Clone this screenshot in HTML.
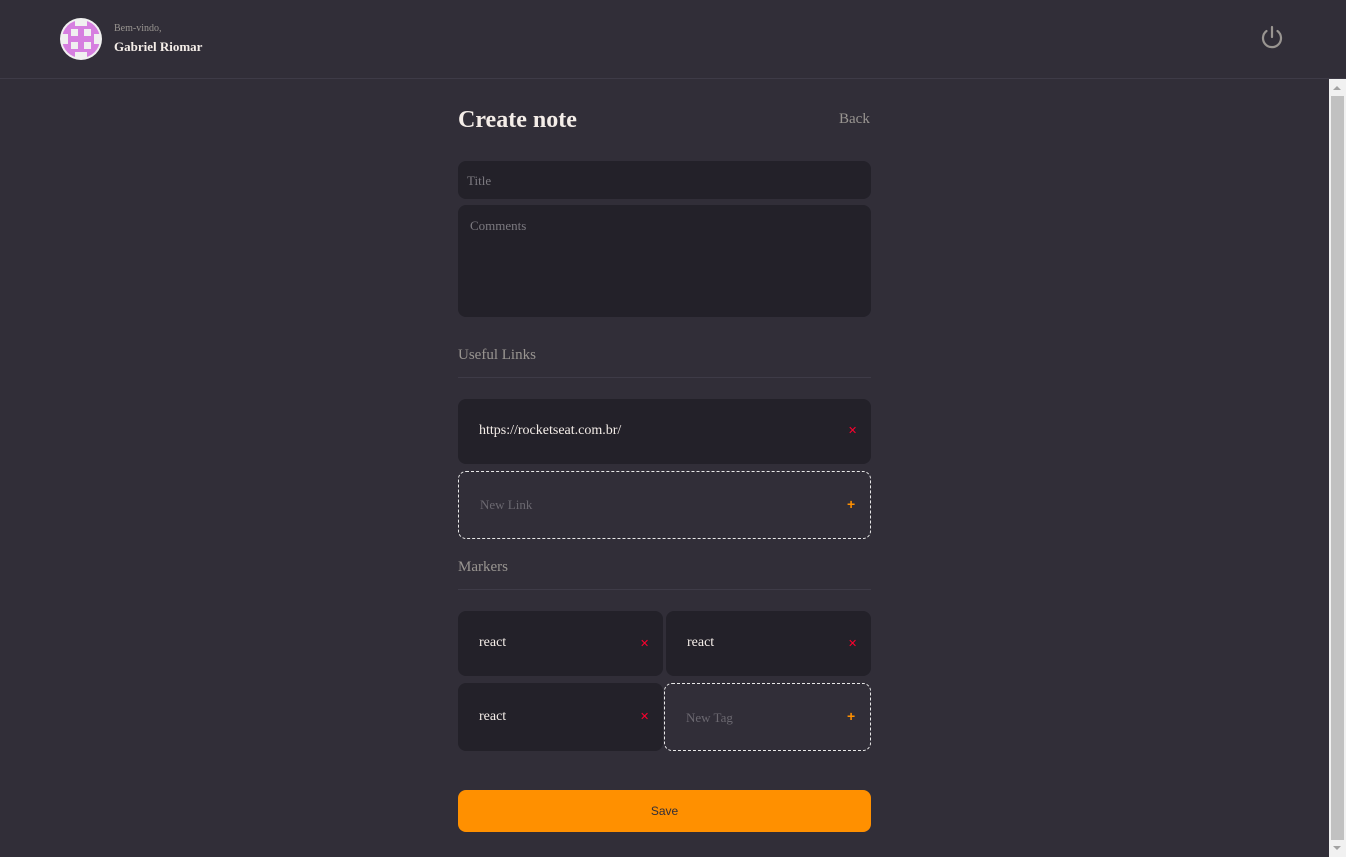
<!DOCTYPE html>
<html><head><meta charset="utf-8"><style>
*{box-sizing:border-box;margin:0;padding:0}
body{width:1346px;height:857px;background:#312e38;font-family:"Liberation Serif",serif;position:relative;overflow:hidden}
.hdr{position:absolute;left:0;top:0;width:1346px;height:79px;border-bottom:1px solid #3e3b47}
.av{position:absolute;left:60px;top:18px;width:42px;height:42px;border-radius:50%;background:#f0f0f0;overflow:hidden}
.av .in{position:absolute;left:2px;top:2px;width:38px;height:38px;border-radius:50%;background:#d67fe0}
.av i{position:absolute;width:7px;height:7px;background:#f0f0f0}
.welcome{position:absolute;left:114px;top:23px;font-size:10px;color:#999591}
.name{position:absolute;left:114px;top:39px;font-size:13px;font-weight:bold;color:#f4ede8}
.pw{position:absolute;left:1259px;top:25px}
.sb{position:absolute;left:1329px;top:79px;width:17px;height:778px;background:#f1f1f1}
.sb .th{position:absolute;left:2px;top:17px;width:13px;height:744px;background:#c1c1c1}
.sb .up,.sb .dn{position:absolute;left:4px;width:0;height:0;border-left:4px solid transparent;border-right:4px solid transparent}
.sb .up{top:7px;border-bottom:4px solid #a3a3a3}
.sb .dn{bottom:7px;border-top:4px solid #a3a3a3}
h1{position:absolute;left:458px;top:107px;font-size:24px;color:#f4ede8;font-weight:bold}
.back{position:absolute;left:839px;top:111px;font-size:15px;color:#999591}
.box{position:absolute;left:458px;width:413px;background:#232129;border-radius:8px;color:#7c7a80;font-size:13px}
.lbl{position:absolute;left:458px;font-size:15px;color:#999591}
.line{position:absolute;left:458px;width:413px;height:1px;background:#3e3b47}
.item{position:absolute;background:#232129;border-radius:8px;font-family:"Liberation Serif",serif;color:#f4ede8;font-size:14px}
.new{position:absolute;border:1px dashed #e8e8e8;border-radius:8px;color:#6b6870;font-size:13px}
.x{position:absolute;color:#ff002e;font-size:11px;font-family:"Liberation Sans",sans-serif}
.p{position:absolute;color:#ff9000;font-size:14px;font-family:"Liberation Sans",sans-serif;font-weight:bold}
.save{position:absolute;left:458px;top:790px;width:413px;height:42px;background:#ff9000;border-radius:8px;color:#312e38;font-family:"Liberation Sans",sans-serif;font-size:12px;text-align:center;line-height:42px}
</style></head><body>
<div class="hdr">
 <div class="av"><div class="in"></div>
  <i style="left:15px;top:1px;width:12px;height:7px"></i>
  <i style="left:15px;top:34px;width:12px;height:7px"></i>
  <i style="left:1px;top:16px;width:7px;height:10px"></i>
  <i style="left:34px;top:16px;width:7px;height:10px"></i>
  <i style="left:11px;top:11px"></i><i style="left:24px;top:11px"></i>
  <i style="left:11px;top:24px"></i><i style="left:24px;top:24px"></i>
 </div>
 <div class="welcome">Bem-vindo,</div>
 <div class="name">Gabriel Riomar</div>
 <svg class="pw" width="26" height="26" viewBox="0 0 26 26" fill="none" stroke="#999591" stroke-width="2.2" stroke-linecap="round"><path d="M13 2v10"/><path d="M7.5 6a9 9 0 1 0 11 0"/></svg>
</div>
<div class="sb"><div class="up"></div><div class="th"></div><div class="dn"></div></div>
<h1>Create note</h1>
<div class="back">Back</div>
<div class="box" style="top:161px;height:38px;padding:12px 9px">Title</div>
<div class="box" style="top:205px;height:112px;padding:13px 12px">Comments</div>
<div class="lbl" style="top:347px">Useful Links</div>
<div class="line" style="top:377px"></div>
<div class="item" style="left:458px;top:399px;width:413px;height:65px;padding:24px 21px">https://rocketseat.com.br/</div>
<div class="x" style="left:848px;top:424px">✕</div>
<div class="new" style="left:458px;top:471px;width:413px;height:68px;padding:25px 21px">New Link</div>
<div class="p" style="left:847px;top:496px">+</div>
<div class="lbl" style="top:559px">Markers</div>
<div class="line" style="top:589px"></div>
<div class="item" style="left:458px;top:611px;width:205px;height:65px;padding:24px 21px">react</div>
<div class="x" style="left:640px;top:637px">✕</div>
<div class="item" style="left:666px;top:611px;width:205px;height:65px;padding:24px 21px">react</div>
<div class="x" style="left:848px;top:637px">✕</div>
<div class="item" style="left:458px;top:683px;width:205px;height:68px;padding:26px 21px">react</div>
<div class="x" style="left:640px;top:710px">✕</div>
<div class="new" style="left:664px;top:683px;width:207px;height:68px;padding:26px 21px">New Tag</div>
<div class="p" style="left:847px;top:708px">+</div>
<div class="save">Save</div>
</body></html>
